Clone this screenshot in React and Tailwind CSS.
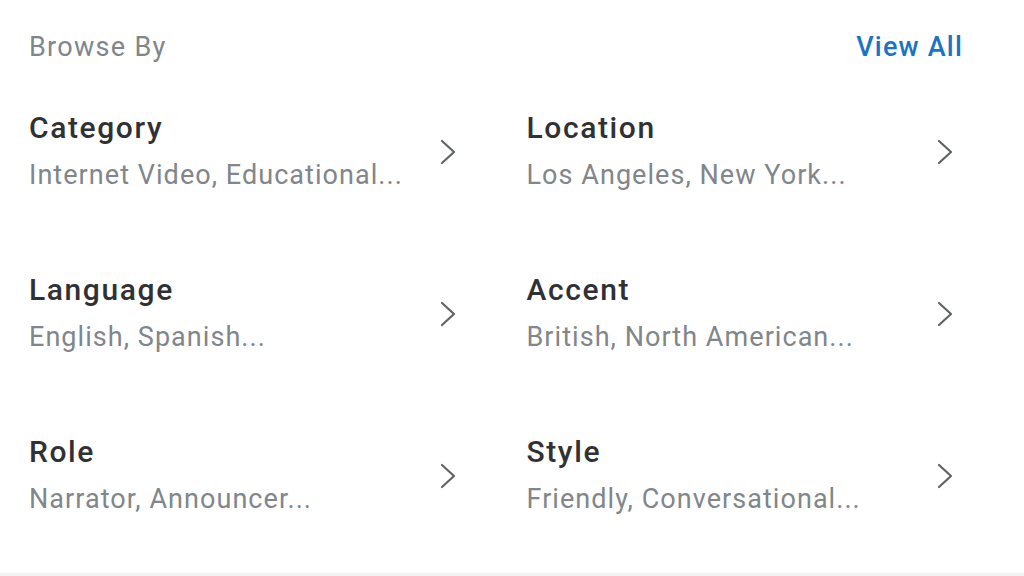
import { useState } from 'react';

const items = [
  { title: 'Category', text: 'Internet Video, Educational...' },
  { title: 'Location', text: 'Los Angeles, New York...' },
  { title: 'Language', text: 'English, Spanish...' },
  { title: 'Accent', text: 'British, North American...' },
  { title: 'Role', text: 'Narrator, Announcer...' },
  { title: 'Style', text: 'Friendly, Conversational...' },
];

const Chevron = () => (
  <svg width="16" height="26" viewBox="0 0 16 26" fill="none" className="shrink-0">
    <polyline points="2,2 14,13 2,24" stroke="#5f6368" strokeWidth="2.2" strokeLinecap="round" strokeLinejoin="round" />
  </svg>
);

const BrowseBy = () => {
  const [active, setActive] = useState(null);

  return (
    <div className="w-[1024px] h-[576px] bg-white font-['Roboto',sans-serif] flex flex-col overflow-hidden">
      <div className="flex-1 pl-[29px]">
        {/* Header */}
        <div className="flex justify-between items-center pt-[30px] pr-[61px]">
          <span className="text-[27px] leading-[34px] tracking-[1.3px] text-[#80868b]">Browse By</span>
          <button className="text-[27px] leading-[34px] tracking-[1.2px] font-medium text-[#1a73c6]">View All</button>
        </div>

        {/* Grid */}
        <div className="grid grid-cols-2 gap-y-[81px] mt-[47px]">
          {items.map((it, i) => (
            <div
              key={it.title}
              onClick={() => setActive(i)}
              className={`flex items-center justify-between pr-[71px] cursor-pointer ${active === i ? 'opacity-80' : ''}`}
            >
              <div className="flex flex-col gap-[13px]">
                <span className="text-[30px] leading-[34px] tracking-[1.6px] font-medium text-[#303134]">{it.title}</span>
                <span className="text-[27px] leading-[34px] tracking-[1.05px] text-[#80868b]">{it.text}</span>
              </div>
              <Chevron />
            </div>
          ))}
        </div>
      </div>
      <div className="h-[3px] bg-[#f1f2f3]" />
    </div>
  );
};

export default BrowseBy;
